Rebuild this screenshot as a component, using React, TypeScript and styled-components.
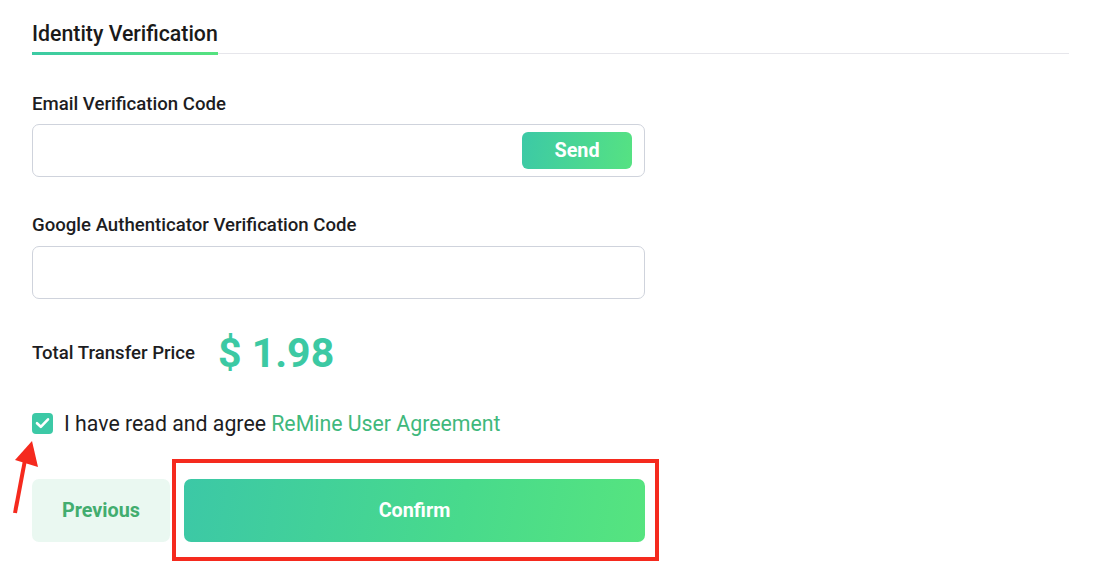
import React from 'react'
import styled, { createGlobalStyle } from 'styled-components'

const GlobalStyle = createGlobalStyle`
  * { box-sizing: border-box; }
  body {
    margin: 0;
    background: #fff;
    font-family: Roboto, "Liberation Sans", Arial, sans-serif;
    color: #1d1d1f;
  }
`

const Page = styled.div`
  position: relative;
  width: 1100px;
  height: 572px;
  padding: 19px 0 0 32px;
`

const Header = styled.div`
  display: flex;
  width: 1037px;
  border-bottom: 1px solid #e6e6eb;
`

const Tab = styled.div`
  display: flex;
  flex-direction: column;
  margin-bottom: -2px;
`

const TabTitle = styled.div`
  font-size: 21.3px;
  line-height: 28px;
  font-weight: 500;
  color: #1a1a1a;
  padding: 1px 0 4px;
`

const TabIndicator = styled.div`
  height: 3px;
  background: linear-gradient(90deg, #3ccaa4, #55e27f);
`

const Form = styled.div`
  width: 613px;
  display: flex;
  flex-direction: column;
`

const Label = styled.div<{ $top: number }>`
  margin-top: ${(p) => p.$top}px;
  font-size: 18.6px;
  line-height: 22px;
  font-weight: 500;
  color: #1d1d1f;
`

const Field = styled.div<{ $top: number }>`
  margin-top: ${(p) => p.$top}px;
  height: 53px;
  border: 1px solid #cfd3dc;
  border-radius: 7px;
  display: flex;
  align-items: center;
  justify-content: flex-end;
  padding-right: 12px;
`

const Input = styled.input`
  flex: 1;
  height: 100%;
  border: none;
  background: transparent;
  outline: none;
  padding: 0 14px;
  font: inherit;
`

const SendButton = styled.button`
  width: 110px;
  height: 37px;
  border: none;
  border-radius: 6px;
  background: linear-gradient(100deg, #3cc9a6, #56e282);
  color: #fff;
  font-family: inherit;
  font-size: 19.8px;
  font-weight: 700;
`

const PriceRow = styled.div`
  margin-top: 30px;
  height: 48px;
  display: flex;
  align-items: center;
  gap: 23px;
`

const PriceLabel = styled.div`
  font-size: 18.6px;
  font-weight: 500;
`

const Price = styled.div`
  font-size: 41px;
  font-weight: 700;
  color: #3cc9a3;
`

const AgreeRow = styled.label`
  margin-top: 32px;
  height: 28px;
  display: flex;
  align-items: center;
  gap: 11px;
  font-size: 21.3px;
  color: #1d1d1f;
`

const CheckBox = styled.span`
  width: 21px;
  height: 21px;
  border-radius: 4px;
  background: #3cc9a6;
  display: flex;
  align-items: center;
  justify-content: center;
`

const Link = styled.span`
  color: #3fb87c;
`

const Actions = styled.div`
  margin-top: 42px;
  display: flex;
  gap: 14px;
`

const Button = styled.button<{ $primary?: boolean }>`
  height: 63px;
  border: none;
  border-radius: 7px;
  font-family: inherit;
  font-size: 19.8px;
  font-weight: 700;
  width: ${(p) => (p.$primary ? '461px' : '138px')};
  color: ${(p) => (p.$primary ? '#fff' : '#42ad6f')};
  background: ${(p) =>
    p.$primary ? 'linear-gradient(100deg, #3cc8a6 0%, #48da8c 60%, #56e47f 100%)' : '#eaf8f1'};
`

const Highlight = styled.div`
  position: relative;
`

const HighlightFrame = styled.div`
  position: absolute;
  left: -12px;
  right: -14px;
  top: -20px;
  bottom: -19px;
  border: 4px solid #f52a1e;
  pointer-events: none;
`

const Arrow = styled.svg`
  position: absolute;
  left: 0;
  top: 430px;
`

export default function App() {
  return (
    <>
      <GlobalStyle />
      <Page>
        <Header>
          <Tab>
            <TabTitle>Identity Verification</TabTitle>
            <TabIndicator />
          </Tab>
        </Header>
        <Form>
          <Label $top={39}>Email Verification Code</Label>
          <Field $top={9}>
            <Input />
            <SendButton>Send</SendButton>
          </Field>
          <Label $top={37}>Google Authenticator Verification Code</Label>
          <Field $top={10}>
            <Input />
          </Field>
          <PriceRow>
            <PriceLabel>Total Transfer Price</PriceLabel>
            <Price>$ 1.98</Price>
          </PriceRow>
          <AgreeRow>
            <CheckBox>
              <svg width="15" height="12" viewBox="0 0 15 12">
                <path d="M2 6.2 L5.8 9.8 L13 2.3" fill="none" stroke="#fff" strokeWidth="2.6" strokeLinecap="round" strokeLinejoin="round" />
              </svg>
            </CheckBox>
            <span>
              I have read and agree <Link>ReMine User Agreement</Link>
            </span>
          </AgreeRow>
          <Actions>
            <Button>Previous</Button>
            <Highlight>
              <Button $primary>Confirm</Button>
              <HighlightFrame />
            </Highlight>
          </Actions>
        </Form>
        <Arrow width="50" height="90" viewBox="0 0 50 90">
          <line x1="15" y1="83" x2="25" y2="30" stroke="#f52a1e" strokeWidth="4" />
          <polygon points="32,11 15,30 38,37" fill="#f52a1e" />
        </Arrow>
      </Page>
    </>
  )
}
